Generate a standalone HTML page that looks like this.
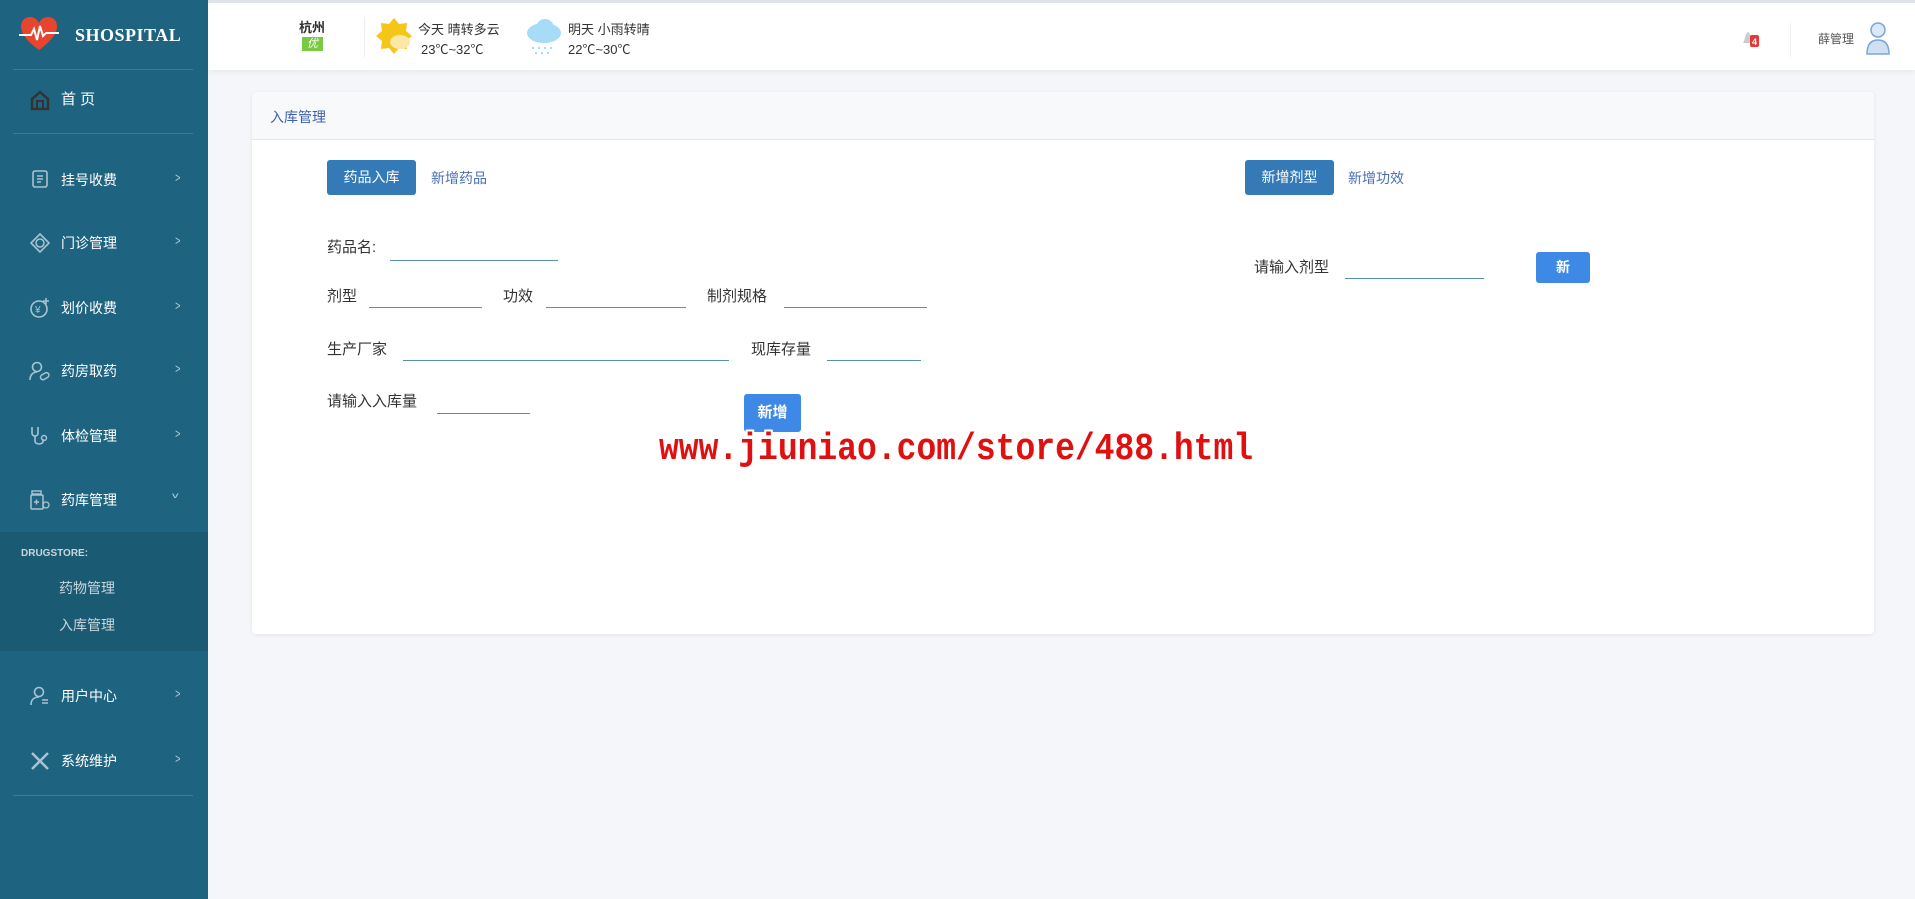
<!DOCTYPE html>
<html><head><meta charset="utf-8"><style>
*{box-sizing:border-box;margin:0;padding:0}
body{width:1915px;height:899px;overflow:hidden;background:#f4f6f9;font-family:"Liberation Sans","Noto Sans CJK SC",sans-serif;position:relative;color:#333}
.abs{position:absolute;white-space:nowrap}
#side{position:absolute;left:0;top:0;width:208px;height:899px;background:#1e6481}
#hdr{position:absolute;left:208px;top:0;width:1707px;height:70px;background:#fff;border-top:3px solid #dfe2e6;box-shadow:0 2px 6px rgba(0,0,0,.06)}
.hr{position:absolute;left:13px;width:180px;height:1px;background:#3d7d96}
.mi{position:absolute;left:61px;color:#fff;font-size:14px;line-height:20px}
.chev{position:absolute;left:174px;color:#b9cfd9;font-size:13px;transform:scaleX(.7)}
.ic{position:absolute;left:29px;width:22px;height:22px}
.lbl{position:absolute;font-size:15px;color:#333;white-space:nowrap}
.ln{position:absolute;height:1px;background:#5a8fb4}
.btn{position:absolute;background:#337ab7;color:#fff;border-radius:3px;font-size:14px;text-align:center}
.lnk{position:absolute;color:#4a6fb5;font-size:14px}
</style></head><body>
<div id="side">
 <svg class="abs" style="left:19px;top:16px" width="40" height="36" viewBox="0 0 40 36"><path d="M20 34 C8 25 2 18 2 10 C2 4 7 1 11 1 C15 1 18 3 20 7 C22 3 25 1 29 1 C33 1 38 4 38 10 C38 18 32 25 20 34Z" fill="#e8452f"/><path d="M0 19 H12 L15 13 L18 24 L21 10 L24 20 L27 17 H40" stroke="#fff" stroke-width="2" fill="none"/></svg>
 <div class="abs" style="left:75px;top:25px;color:#fff;font-family:'Liberation Serif',serif;font-weight:bold;font-size:18px;letter-spacing:.5px">SHOSPITAL</div>
 <div class="hr" style="top:69px"></div>
 <svg class="ic" style="top:89px" viewBox="0 0 22 22"><path d="M3 10 L11 3 L19 10 V20 H3Z" fill="none" stroke="#333" stroke-width="2.5"/><path d="M8 20 V12 H14 V20" fill="none" stroke="#333" stroke-width="2"/></svg>
 <div class="mi" style="top:90px;left:61px;font-size:15px">首 页</div>
 <div class="hr" style="top:133px"></div>
 <svg class="ic" style="top:168px" viewBox="0 0 22 22"><rect x="4" y="3" width="14" height="16" rx="2" fill="none" stroke="#a9c4d0" stroke-width="1.6"/><path d="M8 8h6M8 11h6M8 14h4" stroke="#a9c4d0" stroke-width="1.4"/></svg>
 <div class="mi" style="top:170px">挂号收费</div><div class="chev" style="top:170px">&gt;</div>
 <svg class="ic" style="top:232px" viewBox="0 0 22 22"><path d="M11 2 L20 11 L11 20 L2 11Z" fill="none" stroke="#a9c4d0" stroke-width="1.6"/><circle cx="11" cy="11" r="4" fill="none" stroke="#a9c4d0" stroke-width="1.5"/></svg>
 <div class="mi" style="top:233px">门诊管理</div><div class="chev" style="top:233px">&gt;</div>
 <svg class="ic" style="top:297px" viewBox="0 0 22 22"><circle cx="10" cy="12" r="8" fill="none" stroke="#a9c4d0" stroke-width="1.6"/><text x="6" y="16" font-size="10" fill="#a9c4d0">¥</text><path d="M17 1v6M14 4h6" stroke="#a9c4d0" stroke-width="1.5"/></svg>
 <div class="mi" style="top:298px">划价收费</div><div class="chev" style="top:298px">&gt;</div>
 <svg class="ic" style="top:360px" viewBox="0 0 22 22"><circle cx="8" cy="7" r="4.5" fill="none" stroke="#a9c4d0" stroke-width="1.6"/><path d="M1 20 C1 14 5 12 8 12" fill="none" stroke="#a9c4d0" stroke-width="1.6"/><rect x="11" y="14" width="9" height="5" rx="2.5" transform="rotate(-30 15 16)" fill="none" stroke="#a9c4d0" stroke-width="1.5"/></svg>
 <div class="mi" style="top:361px">药房取药</div><div class="chev" style="top:361px">&gt;</div>
 <svg class="ic" style="top:425px" viewBox="0 0 22 22"><path d="M3 2 V8 C3 12 9 12 9 8 V2" fill="none" stroke="#a9c4d0" stroke-width="1.6"/><path d="M6 11 V16 C6 20 14 20 14 16 V14" fill="none" stroke="#a9c4d0" stroke-width="1.6"/><circle cx="15" cy="13" r="2.5" fill="none" stroke="#a9c4d0" stroke-width="1.4"/></svg>
 <div class="mi" style="top:426px">体检管理</div><div class="chev" style="top:426px">&gt;</div>
 <svg class="ic" style="top:489px" viewBox="0 0 22 22"><rect x="3" y="2" width="9" height="3" fill="none" stroke="#a9c4d0" stroke-width="1.4"/><rect x="2" y="6" width="12" height="14" rx="1" fill="none" stroke="#a9c4d0" stroke-width="1.5"/><path d="M5 13h5M7.5 10.5v5" stroke="#a9c4d0" stroke-width="1.4"/><circle cx="17" cy="16" r="3" fill="none" stroke="#a9c4d0" stroke-width="1.3"/></svg>
 <div class="mi" style="top:490px">药库管理</div><div class="chev" style="top:488px;left:172px;transform:scaleY(.6)">v</div>
 <div class="abs" style="left:0;top:532px;width:208px;height:119px;background:#1b5a73"></div>
 <div class="abs" style="left:21px;top:548px;color:#c8d6dd;font-size:10px;font-weight:bold">DRUGSTORE:</div>
 <div class="abs" style="left:59px;top:578px;color:#c8d6dd;font-size:14px">药物管理</div>
 <div class="abs" style="left:59px;top:615px;color:#c8d6dd;font-size:14px">入库管理</div>
 <svg class="ic" style="top:685px" viewBox="0 0 22 22"><circle cx="10" cy="7" r="4.5" fill="none" stroke="#a9c4d0" stroke-width="1.6"/><path d="M2 20 C2 14 6 12 10 12" fill="none" stroke="#a9c4d0" stroke-width="1.6"/><path d="M13 15h6M13 18h6" stroke="#a9c4d0" stroke-width="1.5"/></svg>
 <div class="mi" style="top:686px">用户中心</div><div class="chev" style="top:686px">&gt;</div>
 <svg class="ic" style="top:750px" viewBox="0 0 22 22"><path d="M3 19 L19 3M3 3 L19 19" stroke="#a9c4d0" stroke-width="2.5"/></svg>
 <div class="mi" style="top:751px">系统维护</div><div class="chev" style="top:751px">&gt;</div>
 <div class="hr" style="top:795px"></div>
</div>
<div id="hdr">
 <div class="abs" style="left:91px;top:14px;font-size:13px;font-weight:bold;color:#333">杭州</div>
 <div class="abs" style="left:94px;top:34px;width:21px;height:14px;background:#7ac943;color:#fff;font-size:11px;text-align:center;line-height:14px;font-style:italic">优</div>
 <div class="abs" style="left:156px;top:14px;width:1px;height:40px;background:#eee"></div>
 <svg class="abs" style="left:166px;top:13px" width="40" height="40" viewBox="0 0 40 40"><polygon points="20,2 25,8 33,7 32,15 38,20 32,25 33,33 25,32 20,38 15,32 7,33 8,25 2,20 8,15 7,7 15,8" fill="#f5c518"/><ellipse cx="26" cy="26" rx="10" ry="7" fill="#fbe7a6"/></svg>
 <div class="abs" style="left:210px;top:16px;font-size:13px">今天 晴转多云</div>
 <div class="abs" style="left:213px;top:36px;font-size:13px">23℃~32℃</div>
 <svg class="abs" style="left:317px;top:14px" width="38" height="40" viewBox="0 0 38 40"><ellipse cx="19" cy="16" rx="17" ry="10" fill="#a6dcf7"/><circle cx="20" cy="11" r="9" fill="#a6dcf7"/><path d="M8 30v2M14 30v2M20 30v2M26 30v2M11 35v2M17 35v2M23 35v2" stroke="#a6dcf7" stroke-width="2"/></svg>
 <div class="abs" style="left:360px;top:16px;font-size:13px">明天 小雨转晴</div>
 <div class="abs" style="left:360px;top:36px;font-size:13px">22℃~30℃</div>
 <svg class="abs" style="left:1533px;top:26px" width="22" height="20" viewBox="0 0 22 20"><path d="M2 14 C4 12 4 4 7 3 C10 4 10 12 12 14Z" fill="#ccc"/><rect x="9" y="6" width="9" height="12" rx="2" fill="#e53935"/><text x="11" y="16" font-size="9" fill="#fff" font-weight="bold">4</text></svg>
 <div class="abs" style="left:1582px;top:20px;width:1px;height:34px;background:#eee"></div>
 <div class="abs" style="left:1610px;top:27px;font-size:12px;color:#555">薛管理</div>
 <svg class="abs" style="left:1657px;top:17px" width="26" height="36" viewBox="0 0 26 36"><circle cx="13" cy="10" r="7" fill="#dbe8f6" stroke="#7aa6d6" stroke-width="1.5"/><path d="M2 34 C2 24 6 20 13 20 C20 20 24 24 24 34Z" fill="#cfe0f3" stroke="#7aa6d6" stroke-width="1.5"/></svg>
</div>
<div class="abs" style="left:252px;top:92px;width:1622px;height:542px;background:#fff;border-radius:4px;box-shadow:0 1px 4px rgba(0,0,0,.08)"></div>
<div class="abs" style="left:252px;top:92px;width:1622px;height:48px;background:#f8f9fb;border-bottom:1px solid #e3e6ea;border-radius:4px 4px 0 0"></div>
<div class="abs" style="left:270px;top:107px;font-size:14px;color:#3e5fb0">入库管理</div>
<div class="btn" style="left:327px;top:160px;width:89px;height:35px;line-height:35px">药品入库</div>
<div class="lnk" style="left:431px;top:168px">新增药品</div>
<div class="btn" style="left:1245px;top:160px;width:89px;height:35px;line-height:35px">新增剂型</div>
<div class="lnk" style="left:1348px;top:168px">新增功效</div>
<div class="lbl" style="left:327px;top:236px">药品名:</div><div class="ln" style="left:390px;top:260px;width:168px"></div>
<div class="lbl" style="left:327px;top:285px">剂型</div><div class="ln" style="left:369px;top:307px;width:113px"></div>
<div class="lbl" style="left:503px;top:285px">功效</div><div class="ln" style="left:546px;top:307px;width:140px"></div>
<div class="lbl" style="left:707px;top:285px">制剂规格</div><div class="ln" style="left:784px;top:307px;width:143px"></div>
<div class="lbl" style="left:327px;top:338px">生产厂家</div><div class="ln" style="left:403px;top:360px;width:326px"></div>
<div class="lbl" style="left:751px;top:338px">现库存量</div><div class="ln" style="left:827px;top:360px;width:94px"></div>
<div class="lbl" style="left:327px;top:390px">请输入入库量</div><div class="ln" style="left:437px;top:413px;width:93px"></div>
<div class="btn" style="left:744px;top:394px;width:57px;height:38px;line-height:38px;background:#3f89e6;font-weight:bold;font-size:15px">新增</div>
<div class="lbl" style="left:1254px;top:256px">请输入剂型</div><div class="ln" style="left:1345px;top:278px;width:139px"></div>
<div class="btn" style="left:1536px;top:252px;width:54px;height:31px;line-height:31px;background:#3f89e6;font-weight:bold">新</div>
<div class="abs" style="left:659px;top:428px;font-family:'Liberation Mono',monospace;font-weight:bold;font-size:33px;color:#e01010;transform:scaleY(1.15);transform-origin:left top;text-shadow:-2px -2px 0 #fff,2px -2px 0 #fff,-2px 2px 0 #fff,2px 2px 0 #fff,0 0 3px #fff">www.jiuniao.com/store/488.html</div>
</body></html>
